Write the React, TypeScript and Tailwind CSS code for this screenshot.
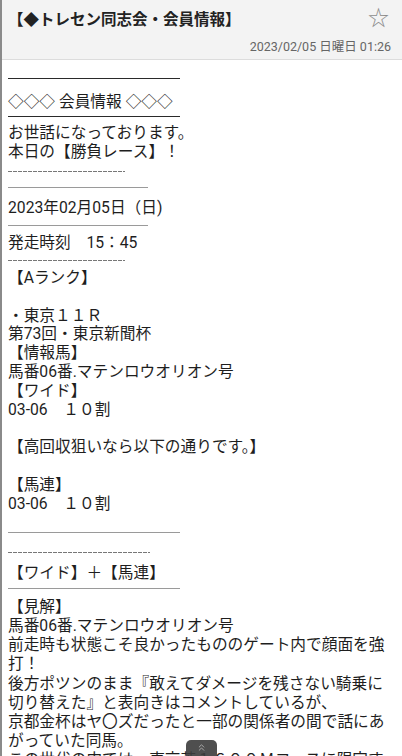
import React from 'react';
import { ChevronsUp } from 'lucide-react';

const Solid: React.FC<{ w: string; dark?: boolean; mt: string }> = ({ w, dark, mt }) => (
  <div className={`${mt} ${w} h-px ${dark ? 'bg-[#2a2a2a]' : 'bg-[#9a9a9a]'}`} />
);

const Dashed: React.FC<{ w: string; mt: string }> = ({ w, mt }) => (
  <div
    className={`${mt} ${w} h-px bg-[repeating-linear-gradient(90deg,#777_0_4px,transparent_4px_5px)]`}
  />
);

const Line: React.FC<{ children?: React.ReactNode }> = ({ children }) => (
  <p className="h-[18.8px] whitespace-pre">{children}</p>
);

const App: React.FC = () => {
  return (
    <div className="relative h-[756px] w-[402px] overflow-hidden bg-white border-l-2 border-[#8a8a8a] font-['Roboto','Noto_Sans_CJK_JP',sans-serif] text-[#1e1e1e]">
      {/* Header */}
      <header className="h-[60px] bg-[#f3f3f3] border-b border-[#dcdcdc] px-[6px] pt-[6px]">
        <div className="flex items-center justify-between h-[24px]">
          <h1 className="text-[15.5px] font-bold leading-[24px] text-[#222] font-['Noto_Sans_CJK_JP',sans-serif]">
            【◆トレセン同志会・会員情報】
          </h1>
          <span className="text-[21px] leading-none text-[#8c8c8c] mr-[7px]">☆</span>
        </div>
        <p className="mt-[8px] text-right text-[12.5px] leading-[18px] text-[#666] pr-[5px]">
          2023/02/05 日曜日 01:26
        </p>
      </header>

      {/* Body */}
      <main className="px-[6px] text-[15.7px] leading-[18.8px]">
        <Solid w="w-[172px]" dark mt="mt-[18px]" />
        <p className="mt-[13px] h-[18.8px]">
          <span className="font-['Noto_Sans_CJK_JP',sans-serif] text-[#1e1e1e]">◇◇◇</span> 会員情報{' '}
          <span className="font-['Noto_Sans_CJK_JP',sans-serif] text-[#1e1e1e]">◇◇◇</span>
        </p>
        <Solid w="w-[172px]" dark mt="mt-[5px]" />
        <div className="mt-[7px]">
          <Line>お世話になっております。</Line>
          <Line>本日の【勝負レース】！</Line>
        </div>
        <Dashed w="w-[117px]" mt="mt-[10px]" />
        <Solid w="w-[140px]" mt="mt-[15px]" />
        <p className="mt-[11px] h-[18.8px]">2023年02月05日（日)</p>
        <Solid w="w-[140px]" mt="mt-[7px]" />
        <p className="mt-[8px] h-[18.8px] whitespace-pre">発走時刻　15：45</p>
        <Dashed w="w-[117px]" mt="mt-[7px]" />
        <div className="mt-[8px]">
          <Line>【Aランク】</Line>
          <Line />
          <Line>・東京１１Ｒ</Line>
          <Line>第73回・東京新聞杯</Line>
          <Line>【情報馬】</Line>
          <Line>馬番06番.マテンロウオリオン号</Line>
          <Line>【ワイド】</Line>
          <Line>03-06　１０割</Line>
          <Line />
          <Line>【高回収狙いなら以下の通りです。】</Line>
          <Line />
          <Line>【馬連】</Line>
          <Line>03-06　１０割</Line>
        </div>
        <Solid w="w-[172px]" mt="mt-[19px]" />
        <Dashed w="w-[142px]" mt="mt-[19px]" />
        <p className="mt-[11px] h-[18.8px]">【ワイド】＋【馬連】</p>
        <Solid w="w-[172px]" mt="mt-[5px]" />
        <div className="mt-[8px] leading-[19.1px]">
          <p>【見解】</p>
          <p>馬番06番.マテンロウオリオン号</p>
          <p>
            前走時も状態こそ良かったもののゲート内で顔面を強打！
            <br />
            後方ポツンのまま『敢えてダメージを残さない騎乗に切り替えた』と表向きはコメントしているが、
            <br />
            京都金杯はヤ〇ズだったと一部の関係者の間で話にあがっていた同馬。
            <br />
            この世代の中では、東京芝１６００Ｍコースに限定すれば上位の存在です。
          </p>
        </div>
      </main>

      {/* Scroll-to-top */}
      <button className="absolute bottom-[-4px] left-[184px] w-[31px] h-[20px] rounded-[5px] bg-[#3c3c3c]/90 flex justify-center pt-[2px]">
        <ChevronsUp className="w-[11px] h-[11px] text-[#b0b0b0]" strokeWidth={2} />
      </button>
    </div>
  );
};

export default App;
